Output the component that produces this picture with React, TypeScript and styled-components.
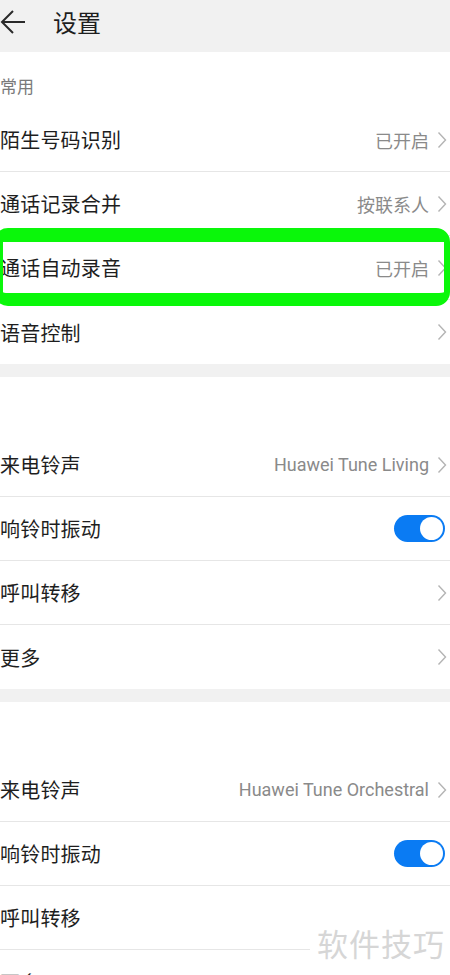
import styled, { createGlobalStyle } from "styled-components";

type RowItem = {
  label: string;
  value?: string;
  toggle?: boolean;
  chevron?: boolean;
  marked?: boolean;
};

type SectionData = {
  title?: string;
  rows: RowItem[];
};

const GlobalStyle = createGlobalStyle`
  html, body {
    margin: 0;
    padding: 0;
    background: #ffffff;
  }
  body {
    font-family: Roboto, "Noto Sans CJK SC", sans-serif;
    color: #222222;
  }
`;

const Page = styled.div`
  position: relative;
  width: 450px;
  height: 975px;
  overflow: hidden;
  background: #ffffff;
`;

const Header = styled.div`
  height: 52px;
  background: #f1f1f1;
  display: flex;
  align-items: center;
  gap: 27px;
  padding-bottom: 12px;
  box-sizing: border-box;
  padding-top: 4px;
`;

const BackButton = styled.div`
  width: 26px;
  height: 26px;
  display: flex;
  align-items: center;
  justify-content: center;
`;

const Title = styled.h1`
  margin: 0;
  font-family: "Noto Sans CJK SC", sans-serif;
  font-size: 24px;
  font-weight: 400;
  color: #1e1e1e;
  line-height: 1;
`;

const Section = styled.section`
  background: #ffffff;
`;

const SectionTitle = styled.div`
  height: 56px;
  box-sizing: border-box;
  padding-top: 10px;
  display: flex;
  align-items: center;
  font-family: "Noto Sans CJK SC", sans-serif;
  font-size: 17px;
  color: #7a7a7a;
`;

const Band = styled.div`
  height: 13px;
  background: #f1f1f1;
`;

const Row = styled.div<{ $last: boolean }>`
  position: relative;
  height: 64px;
  box-sizing: border-box;
  display: flex;
  align-items: center;
  justify-content: space-between;
  border-bottom: ${(p) => (p.$last ? "none" : "1px solid #e6e6e6")};
`;

const Label = styled.span`
  font-family: "Noto Sans CJK SC", sans-serif;
  font-size: 20px;
  color: #1e1e1e;
  letter-spacing: 0.2px;
`;

const Trail = styled.div`
  display: flex;
  align-items: center;
  gap: 8px;
  padding-right: 3px;
`;

const Value = styled.span`
  font-family: Roboto, "Noto Sans CJK SC", sans-serif;
  font-size: 18px;
  color: #8a8a8a;
`;

const Switch = styled.div<{ $on: boolean }>`
  width: 51px;
  height: 27px;
  border-radius: 14px;
  background: ${(p) => (p.$on ? "#0a7bf3" : "#cfcfcf")};
  display: flex;
  align-items: center;
  justify-content: ${(p) => (p.$on ? "flex-end" : "flex-start")};
  padding: 0 2px;
  box-sizing: border-box;
  margin-right: 2px;
`;

const Knob = styled.div`
  width: 23px;
  height: 23px;
  border-radius: 50%;
  background: #ffffff;
`;

const Highlight = styled.div`
  position: absolute;
  left: -6px;
  right: 0px;
  top: -8px;
  bottom: -7px;
  border-style: solid;
  border-color: #0af70a;
  border-width: 14px 6px 13px 9px;
  border-radius: 14px;
  pointer-events: none;
`;

const Watermark = styled.div`
  position: absolute;
  right: 0;
  top: 904px;
  padding: 16px 5px 12px 7px;
  background: #ffffff;
  font-family: "Noto Sans CJK SC", sans-serif;
  font-size: 31px;
  color: #d6d6d6;
  letter-spacing: 1px;
  line-height: 46px;
`;

const Chevron = () => (
  <svg width="10" height="18" viewBox="0 0 10 18">
    <path d="M1.5 1.5 L8.5 9 L1.5 16.5" fill="none" stroke="#b4b4b4" strokeWidth="1.4" />
  </svg>
);

const BackArrow = () => (
  <svg width="26" height="26" viewBox="0 0 26 26">
    <path d="M25 13 H2 M13 2 L2 13 L13 24" fill="none" stroke="#2a2a2a" strokeWidth="2" />
  </svg>
);

const sections: SectionData[] = [
  {
    title: "常用",
    rows: [
      { label: "陌生号码识别", value: "已开启", chevron: true },
      { label: "通话记录合并", value: "按联系人", chevron: true },
      { label: "通话自动录音", value: "已开启", chevron: true, marked: true },
      { label: "语音控制", chevron: true },
    ],
  },
  {
    rows: [
      { label: "来电铃声", value: "Huawei Tune Living", chevron: true },
      { label: "响铃时振动", toggle: true },
      { label: "呼叫转移", chevron: true },
      { label: "更多", chevron: true },
    ],
  },
  {
    rows: [
      { label: "来电铃声", value: "Huawei Tune Orchestral", chevron: true },
      { label: "响铃时振动", toggle: true },
      { label: "呼叫转移", chevron: true },
      { label: "更多", chevron: true },
    ],
  },
];

export default function App() {
  return (
    <Page>
      <GlobalStyle />
      <Header>
        <BackButton>
          <BackArrow />
        </BackButton>
        <Title>设置</Title>
      </Header>
      {sections.map((section, si) => (
        <div key={si}>
          <Section>
            <SectionTitle>{section.title}</SectionTitle>
            {section.rows.map((row, ri) => (
              <Row key={ri} $last={ri === section.rows.length - 1}>
                <Label>{row.label}</Label>
                <Trail>
                  {row.value && <Value>{row.value}</Value>}
                  {row.toggle && (
                    <Switch $on>
                      <Knob />
                    </Switch>
                  )}
                  {row.chevron && <Chevron />}
                </Trail>
                {row.marked && <Highlight />}
              </Row>
            ))}
          </Section>
          {si < sections.length - 1 && <Band />}
        </div>
      ))}
      <Watermark>软件技巧</Watermark>
    </Page>
  );
}
